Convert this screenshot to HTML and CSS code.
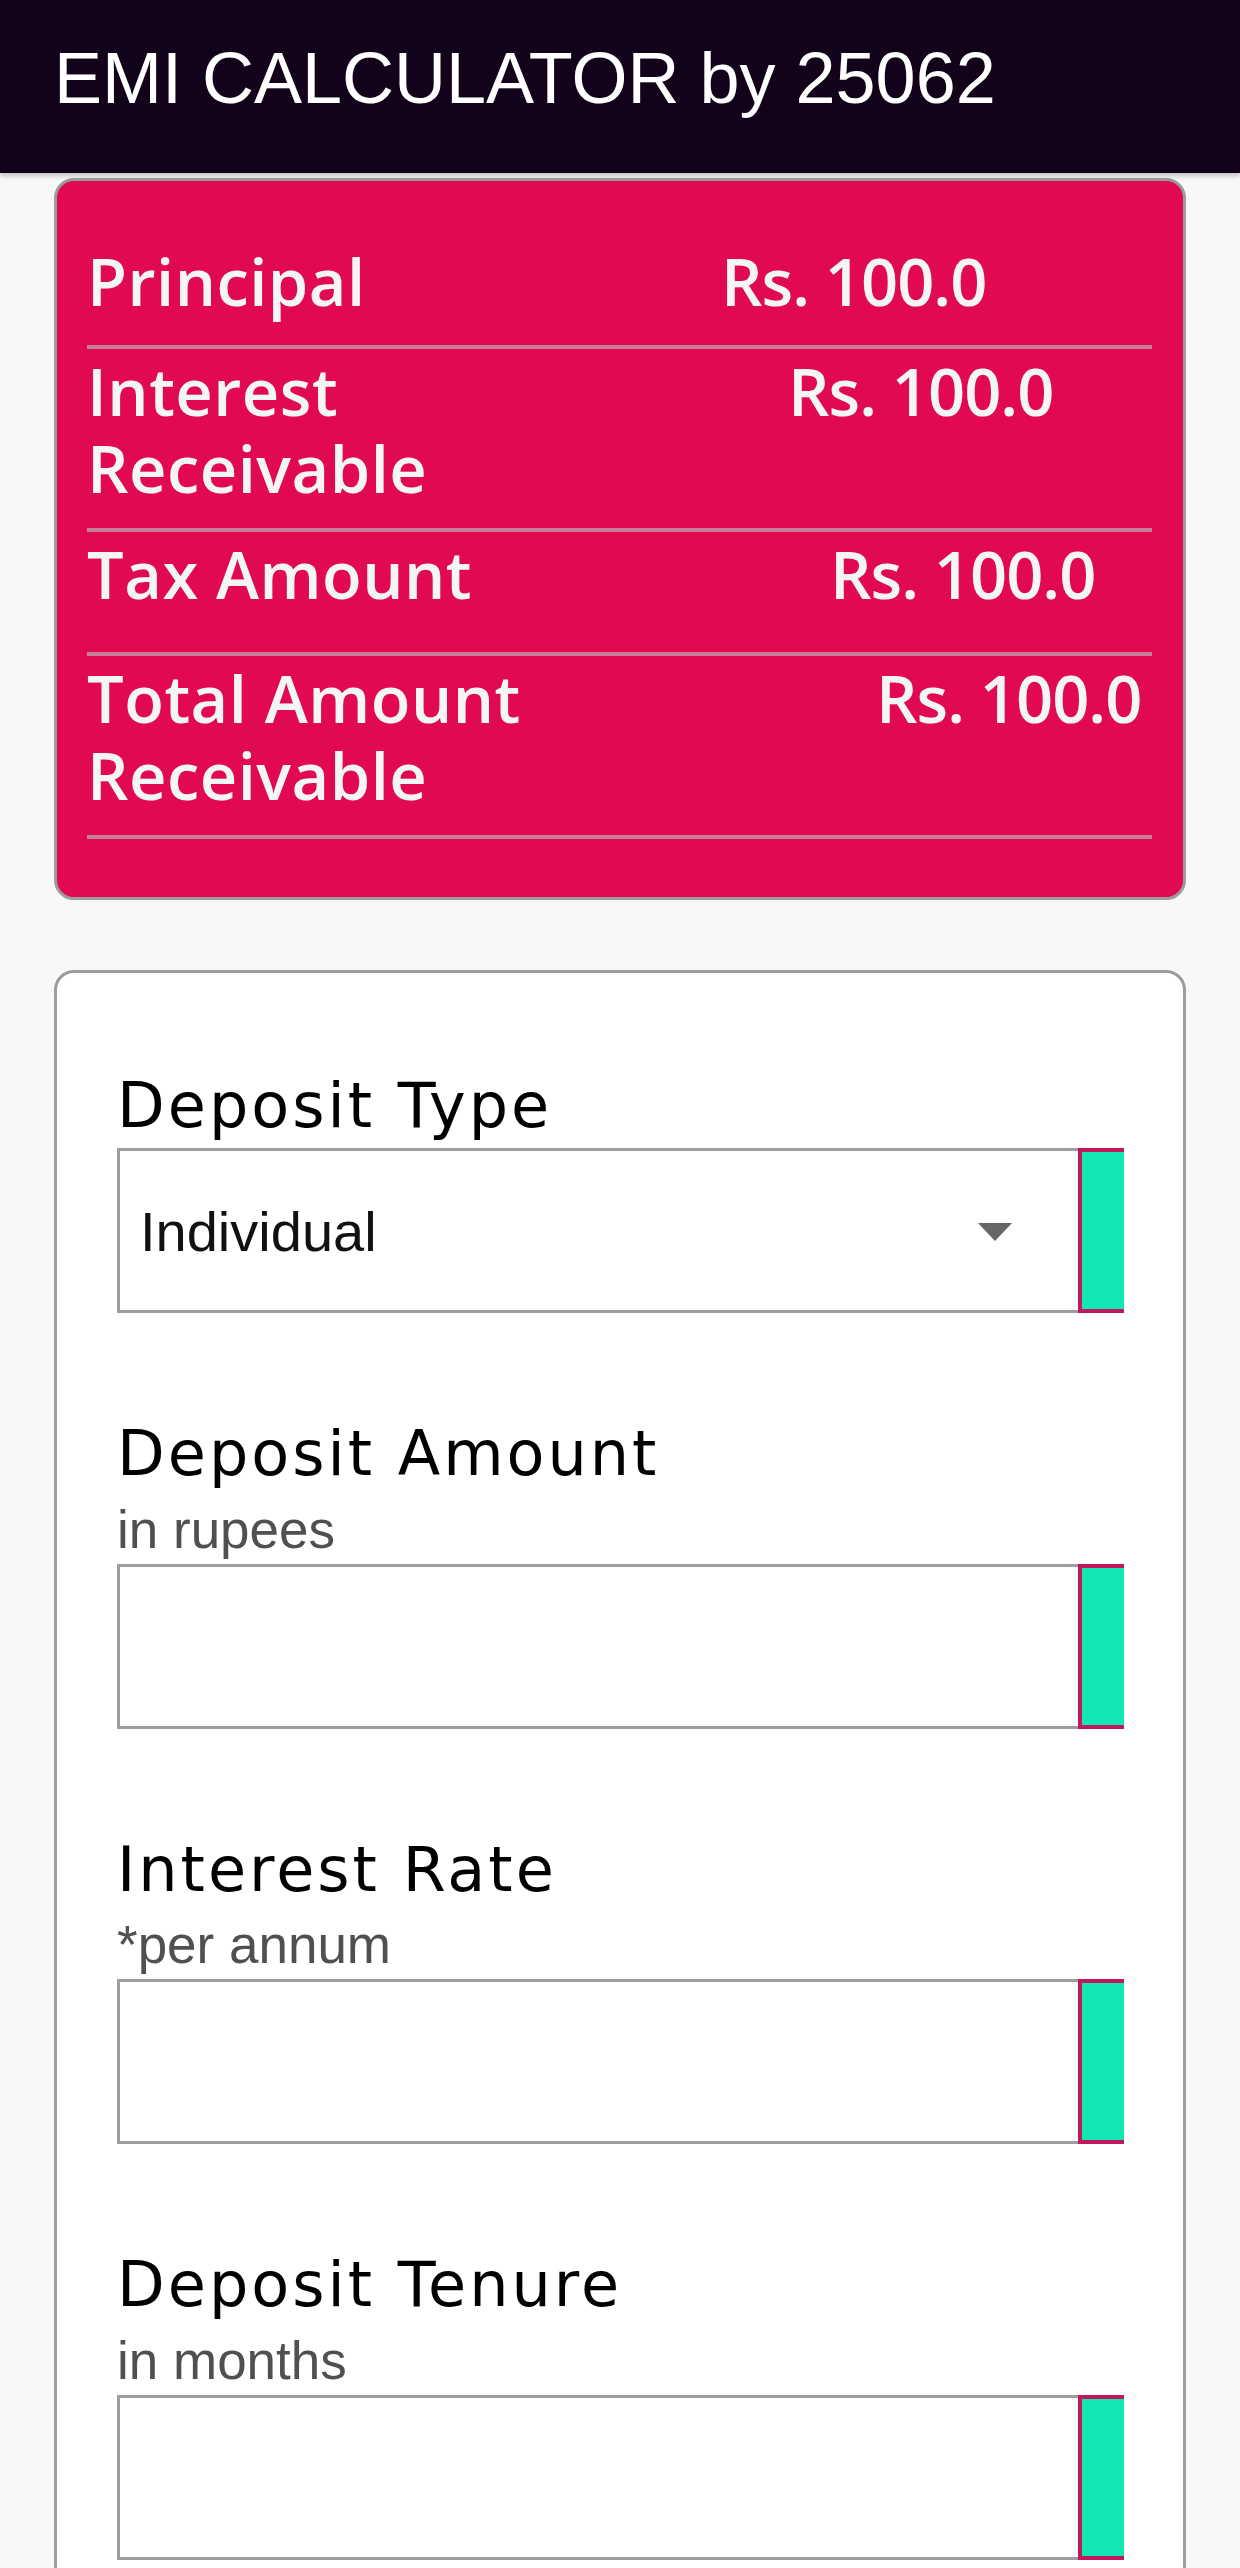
FILE: index.html
```html
<!DOCTYPE html>
<html lang="en">
<head>
<meta charset="utf-8">
<title>EMI CALCULATOR by 25062</title>
<link rel="stylesheet" href="styles.css">
</head>
<body>
<header class="appbar">
  <h1 class="appbar-title">EMI CALCULATOR by 25062</h1>
</header>
<main class="content">
  <section class="summary">
    <div class="sum-row sum-row-a">
      <div class="sum-label">Principal</div>
      <div class="sum-value off-1">Rs. 100.0</div>
    </div>
    <div class="sum-row">
      <div class="sum-label">Interest Receivable</div>
      <div class="sum-value off-2">Rs. 100.0</div>
    </div>
    <div class="sum-row sum-row-c">
      <div class="sum-label">Tax Amount</div>
      <div class="sum-value off-3">Rs. 100.0</div>
    </div>
    <div class="sum-row">
      <div class="sum-label">Total Amount Receivable</div>
      <div class="sum-value off-4">Rs. 100.0</div>
    </div>
  </section>

  <section class="form">
    <div class="group group-first">
      <div class="label">Deposit Type</div>
      <div class="field field-nosub">
        <div class="box select">
          <span class="select-text">Individual</span>
          <span class="caret"></span>
        </div>
        <div class="tab"></div>
      </div>
    </div>

    <div class="group">
      <div class="label">Deposit Amount</div>
      <div class="sub">in rupees</div>
      <div class="field">
        <div class="box"></div>
        <div class="tab"></div>
      </div>
    </div>

    <div class="group">
      <div class="label">Interest Rate</div>
      <div class="sub">*per annum</div>
      <div class="field">
        <div class="box"></div>
        <div class="tab"></div>
      </div>
    </div>

    <div class="group">
      <div class="label">Deposit Tenure</div>
      <div class="sub">in months</div>
      <div class="field">
        <div class="box"></div>
        <div class="tab"></div>
      </div>
    </div>
  </section>
</main>
</body>
</html>
```

FILE: styles.css
```css
* { box-sizing: border-box; }

body {
  margin: 0;
  background: #f8f8f8;
  font-family: "Liberation Sans", Arial, sans-serif;
}

.appbar {
  height: 173px;
  background: #12021a;
  padding: 42px 0 0 54px;
  box-shadow: 0 3px 5px rgba(0, 0, 0, 0.22);
  position: relative;
  z-index: 1;
}

.appbar-title {
  margin: 0;
  font-family: "Liberation Sans", Arial, sans-serif;
  font-weight: normal;
  font-size: 72px;
  line-height: 1;
  color: #ffffff;
}

.content {
  padding: 5px 54px 0;
}

/* summary card */
.summary {
  background: #e1094f;
  border: 3px solid #9c9c9c;
  border-radius: 20px;
  padding: 58px 31px 58px 30px;
  color: #f4f6f6;
  font-family: "Open Sans", "Noto Sans", sans-serif;
  font-weight: 600;
  font-size: 65px;
  line-height: 77px;
}

.sum-row {
  display: flex;
  align-items: flex-start;
  padding: 4px 0 21px;
  border-bottom: 4px solid #c6809b;
}

.sum-row-a { padding-bottom: 25px; }
.sum-row-c { padding-bottom: 39px; }

.sum-label {
  width: 480px;
  flex-shrink: 0;
  letter-spacing: 0.5px;
}

.sum-value {
  white-space: nowrap;
  letter-spacing: -1px;
}

.off-1 { margin-left: 154px; }
.off-2 { margin-left: 221px; }
.off-3 { margin-left: 263px; }
.off-4 { margin-left: 309px; }

/* form card */
.form {
  margin-top: 70px;
  background: #ffffff;
  border: 3px solid #9c9c9c;
  border-radius: 20px;
  padding: 96px 59px 120px 60px;
}

.group { margin-top: 104px; }
.group-first { margin-top: 0; }

.label {
  font-family: "DejaVu Sans", sans-serif;
  font-size: 62px;
  line-height: 74.4px;
  letter-spacing: 3px;
  color: #000000;
}

.sub {
  margin-top: 7px;
  font-family: "Liberation Sans", Arial, sans-serif;
  font-size: 53px;
  line-height: 61px;
  color: #505050;
}

.field {
  display: flex;
  height: 165px;
  margin-top: 4px;
}

.field-nosub { margin-top: 5px; }

.box {
  flex: 1;
  border: 3px solid #9e9e9e;
  border-right: none;
  background: #ffffff;
}

.select {
  display: flex;
  align-items: center;
  justify-content: space-between;
  padding: 0 66px 0 20px;
}

.select-text {
  font-family: "Liberation Sans", Arial, sans-serif;
  font-size: 56px;
  color: #111111;
  padding-top: 2px;
}

.caret {
  width: 0;
  height: 0;
  border-left: 17px solid transparent;
  border-right: 17px solid transparent;
  border-top: 18px solid #666666;
  margin-top: 2px;
}

.tab {
  width: 46px;
  flex-shrink: 0;
  background: #12e6b3;
  border: 4px solid #c2185b;
  border-right: none;
}
```
